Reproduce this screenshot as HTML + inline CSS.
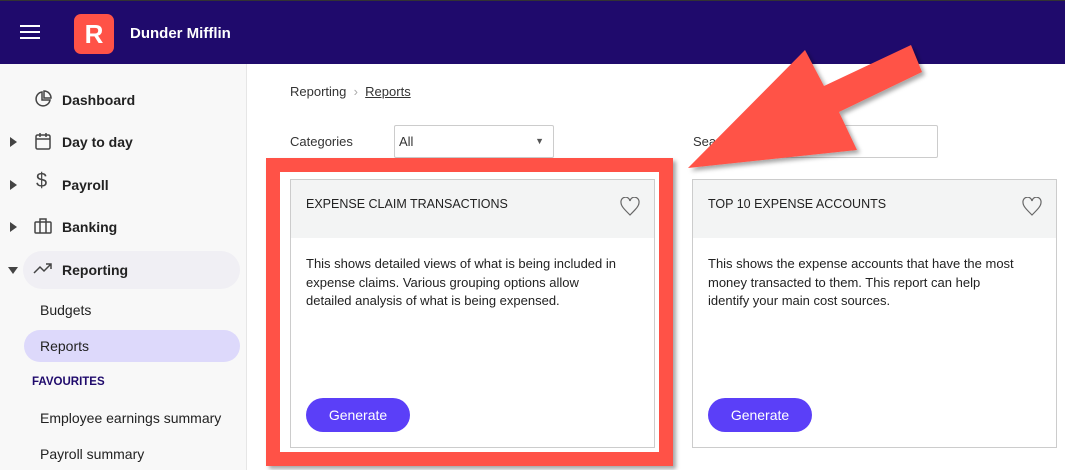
<!DOCTYPE html>
<html><head><style>
*{box-sizing:border-box;margin:0;padding:0}
body{width:1065px;height:470px;overflow:hidden;font-family:"Liberation Sans",sans-serif;background:#fff;position:relative;color:#222}
.hdr{position:absolute;left:0;top:0;width:1065px;height:64px;background:#1f0a6c;border-top:1px solid #333}
.side{position:absolute;left:0;top:64px;width:247px;height:406px;background:#f8f8f8;border-right:1px solid #e6e6e6}
.nav{position:absolute;left:62px;font-size:14px;font-weight:bold;color:#222}
.tri{position:absolute;left:10px;width:0;height:0;border-top:5px solid transparent;border-bottom:5px solid transparent;border-left:7px solid #444}
.sub{position:absolute;left:40px;font-size:14px;color:#222}
.t{position:absolute;font-size:13px;color:#333}
.card{position:absolute;top:179px;width:365px;height:269px;border:1px solid #ccc;background:#fff}
.card .h{height:58px;background:#f3f4f4;padding:17px 15px;font-size:12.5px;color:#222}
.card .b{padding:17px 36px 17px 15px;font-size:13px;line-height:18.5px;color:#222}
.btn{position:absolute;left:15px;top:218px;width:104px;height:34px;border-radius:17px;background:#5b3ff8;color:#fff;font-size:14px;text-align:center;line-height:34px}
.heart{position:absolute;right:14px;top:17px}
</style></head><body>
<div class="hdr">
<div style="position:absolute;left:20px;top:24px;width:20px;height:2px;background:#fff;box-shadow:0 6px 0 #fff,0 12px 0 #fff"></div>
<div style="position:absolute;left:74px;top:13px;width:40px;height:40px;border-radius:7px;background:#ff5247;color:#fff;font-weight:bold;font-size:26px;text-align:center;line-height:40px">R</div>
<div style="position:absolute;left:130px;top:24px;color:#fff;font-weight:bold;font-size:15px">Dunder Mifflin</div>
</div>
<div class="side">
<svg style="position:absolute;left:34px;top:26px" width="18" height="18" viewBox="0 0 18 18" fill="none" stroke="#444" stroke-width="1.5"><path d="M8 2A7 7 0 1 0 16 10H8Z"/><path d="M10 1v7h7A7 7 0 0 0 10 1Z"/></svg>
<div class="nav" style="top:28px">Dashboard</div>
<div class="tri" style="top:73px"></div>
<svg style="position:absolute;left:34px;top:68px" width="18" height="18" viewBox="0 0 18 18" fill="none" stroke="#444" stroke-width="1.5"><rect x="2" y="3" width="14" height="14" rx="1.5"/><path d="M2 7h14M6 1v4M12 1v4"/></svg>
<div class="nav" style="top:70px">Day to day</div>
<div class="tri" style="top:116px"></div>
<div style="position:absolute;left:36px;top:106px;font-size:20px;color:#444">$</div>
<div class="nav" style="top:113px">Payroll</div>
<div class="tri" style="top:158px"></div>
<svg style="position:absolute;left:34px;top:153px" width="18" height="18" viewBox="0 0 18 18" fill="none" stroke="#444" stroke-width="1.5"><rect x="1" y="5" width="16" height="11" rx="1"/><path d="M6 5V2h6v3M6 5v11M12 5v11"/></svg>
<div class="nav" style="top:155px">Banking</div>
<div style="position:absolute;left:23px;top:187px;width:217px;height:38px;border-radius:19px;background:#f0eff4"></div>
<div style="position:absolute;left:8px;top:203px;border-left:5px solid transparent;border-right:5px solid transparent;border-top:7px solid #444"></div>
<svg style="position:absolute;left:33px;top:197px" width="20" height="14" viewBox="0 0 20 14" fill="none" stroke="#444" stroke-width="1.5"><path d="M1 12l6-6 4 4 7-7M13 3h5v5"/></svg>
<div class="nav" style="top:198px">Reporting</div>
<div class="sub" style="top:238px">Budgets</div>
<div style="position:absolute;left:24px;top:266px;width:216px;height:32px;border-radius:16px;background:#ddd9fb"></div>
<div class="sub" style="top:274px">Reports</div>
<div style="position:absolute;left:32px;top:312px;font-size:11.5px;font-weight:bold;color:#1f0a6c">FAVOURITES</div>
<div class="sub" style="top:346px">Employee earnings summary</div>
<div class="sub" style="top:382px">Payroll summary</div>
</div>
<div class="t" style="left:290px;top:84px">Reporting &nbsp;<span style="color:#aaa">›</span>&nbsp; <span style="text-decoration:underline">Reports</span></div>
<div class="t" style="left:290px;top:134px">Categories</div>
<div style="position:absolute;left:394px;top:125px;width:160px;height:33px;border:1px solid #ccc;border-radius:2px;font-size:13px;padding:8px 4px;color:#333">All<span style="position:absolute;right:9px;top:10px;font-size:9px;color:#555">▼</span></div>
<div class="t" style="left:693px;top:134px">Search</div>
<div style="position:absolute;left:775px;top:125px;width:163px;height:33px;border:1px solid #ccc;border-radius:2px"></div>
<div style="position:absolute;left:266px;top:158px;width:407px;height:308px;border:14px solid #ff5247;box-shadow:3px 3px 4px rgba(0,0,0,.35)"></div>
<div class="card" style="left:290px"><div class="h">EXPENSE CLAIM TRANSACTIONS</div>
<svg class="heart" width="20" height="20" viewBox="0 0 20 20" fill="none" stroke="#666" stroke-width="1.2"><path d="M10 18C4 12 1 9 1 5.5A4 4 0 0 1 10 4a4 4 0 0 1 9 1.5C19 9 16 12 10 18Z"/></svg>
<div class="b">This shows detailed views of what is being included in expense claims. Various grouping options allow detailed analysis of what is being expensed.</div><div class="btn">Generate</div></div>
<div class="card" style="left:692px"><div class="h">TOP 10 EXPENSE ACCOUNTS</div>
<svg class="heart" width="20" height="20" viewBox="0 0 20 20" fill="none" stroke="#666" stroke-width="1.2"><path d="M10 18C4 12 1 9 1 5.5A4 4 0 0 1 10 4a4 4 0 0 1 9 1.5C19 9 16 12 10 18Z"/></svg>
<div class="b">This shows the expense accounts that have the most money transacted to them. This report can help identify your main cost sources.</div><div class="btn">Generate</div></div>
<svg style="position:absolute;left:0;top:0" width="1065" height="470"><defs><filter id="s"><feDropShadow dx="3" dy="3" stdDeviation="2" flood-opacity=".35"/></filter></defs>
<polygon filter="url(#s)" fill="#ff5247" points="688,168 805,50 824,86 911,45 922,72 839,112 857,150"/></svg>
</body></html>
